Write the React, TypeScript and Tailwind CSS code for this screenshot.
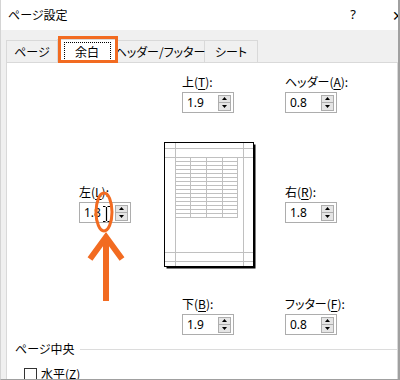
import React from 'react';

const jp = "font-['Meiryo_UI','Noto_Sans_CJK_JP',sans-serif] [font-feature-settings:'palt']";

const Spinner = () => (
  <div className="flex flex-col gap-0 ml-auto mr-[2px]">
    <div className="w-[13px] h-[8px] bg-[#e5e5e5] border border-[#adadad] flex items-center justify-center">
      <svg width="5" height="3" viewBox="0 0 5 3"><path d="M2.5 0 L5 3 L0 3 Z" fill="#000" /></svg>
    </div>
    <div className="w-[13px] h-[8px] bg-[#e5e5e5] border border-[#adadad] border-t-0 flex items-center justify-center">
      <svg width="5" height="3" viewBox="0 0 5 3"><path d="M0 0 L5 0 L2.5 3 Z" fill="#000" /></svg>
    </div>
  </div>
);

const Field = ({ pre, u, value }: { pre: string; u: string; value: string }) => (
  <div className="flex flex-col">
    <div className={`h-[16px] leading-[16px] text-[12px] text-black whitespace-nowrap ${jp}`}>
      {pre}(<span className="underline underline-offset-2">{u}</span>):
    </div>
    <div className="mt-[2px] w-[52px] h-[21px] border border-[#adadad] bg-white flex items-center pl-[4px]">
      <span className="text-[12px] font-['Noto_Sans',sans-serif] text-black">{value}</span>
      <Spinner />
    </div>
  </div>
);

const PagePreview = () => {
  const rows = Array.from({ length: 16 }, (_, i) => 15 + i * 4);
  return (
    <svg width="92" height="127" viewBox="0 0 92 127">
      <rect x="2.5" y="2.5" width="89" height="124" fill="#000" />
      <rect x="0.5" y="0.5" width="89" height="124" fill="#fff" stroke="#000" />
      <g stroke="#c0c0c0" strokeWidth="1">
        <line x1="11.5" y1="1" x2="11.5" y2="124" />
        <line x1="79.5" y1="1" x2="79.5" y2="124" />
        <line x1="1" y1="6.5" x2="89" y2="6.5" />
        <line x1="1" y1="15.5" x2="89" y2="15.5" />
        <line x1="1" y1="110.5" x2="89" y2="110.5" />
        <line x1="1" y1="119.5" x2="89" y2="119.5" />
        {rows.map((y) => (
          <line key={y} x1="11" y1={y + 0.5} x2="73" y2={y + 0.5} />
        ))}
        <line x1="73.5" y1="15" x2="73.5" y2="76" />
        <line x1="26.5" y1="15" x2="26.5" y2="76" />
        <line x1="42.5" y1="15" x2="42.5" y2="76" />
        <line x1="58.5" y1="15" x2="58.5" y2="76" />
      </g>
    </svg>
  );
};

export default function App() {
  return (
    <div className={`relative w-[400px] h-[380px] overflow-hidden bg-white border-l border-l-[#d4d4d4] border-r-2 border-r-[#a0a0a0] border-b border-b-[#a0a0a0] ${jp}`}>
      {/* title bar */}
      <div className="h-[30px] flex items-center pl-[7px] text-[12px] text-black">
        <span>ページ設定</span>
        <span className="ml-auto mr-[36px] text-[13px] font-['Noto_Sans',sans-serif]">?</span>
        <span className="mr-[-6px] text-[14px] font-['Noto_Sans',sans-serif]">✕</span>
      </div>

      <div className="bg-[#f0f0f0] h-[350px] pl-[5px] pt-[8px]">
        {/* tabs */}
        <div className="flex items-end h-[24px] text-[12px] text-black whitespace-nowrap">
          <div className="w-[52px] h-[22px] border border-[#d9d9d9] border-b-0 flex items-center justify-center pt-[1px]">ページ</div>
          <div className="w-[60px] h-[24px] bg-white border border-[#d9d9d9] border-b-0 flex items-center justify-center -mx-[1px] relative z-10 mb-[-1px]">
            <div className="w-[47px] h-[19px] border border-dotted border-black flex items-center justify-center">余白</div>
          </div>
          <div className="w-[89px] h-[22px] border border-[#d9d9d9] border-b-0 border-l-0 flex items-center justify-center pt-[1px]">ヘッダー/フッター</div>
          <div className="w-[53px] h-[22px] border border-[#d9d9d9] border-b-0 border-l-0 flex items-center justify-center pt-[1px]">シート</div>
        </div>

        {/* panel */}
        <div className="bg-white border border-[#d9d9d9] h-[330px] pt-[11px]">
          <div className="flex pl-[175px] gap-[51px]">
            <Field pre="上" u="T" value="1.9" />
            <Field pre="ヘッダー" u="A" value="0.8" />
          </div>

          <div className="flex mt-[29px] h-[127px]">
            <div className="w-[157px] pl-[72px] pt-[42px]">
              <Field pre="左" u="L" value="1.8" />
            </div>
            <PagePreview />
            <div className="pl-[29px] pt-[42px]">
              <Field pre="右" u="R" value="1.8" />
            </div>
          </div>

          <div className="flex pl-[175px] gap-[51px] mt-[27px]">
            <Field pre="下" u="B" value="1.9" />
            <Field pre="フッター" u="F" value="0.8" />
          </div>

          <div className="flex items-center mt-[6px] pl-[8px] h-[16px] text-[12px] text-black">
            <span>ページ中央</span>
            <div className="flex-1 h-px bg-[#dcdcdc] ml-[5px]" />
          </div>
          <div className="flex items-center mt-[8px] pl-[17px] text-[12px] text-black">
            <div className="w-[13px] h-[13px] border border-[#333] bg-white" />
            <span className="ml-[4px]">水平(<span className="underline underline-offset-2">Z</span>)</span>
          </div>
        </div>
      </div>

      {/* annotations */}
      <div className="absolute left-[57px] top-[36px] w-[60px] h-[27px] border-[3px] border-[#f26b21] pointer-events-none z-20" />
      <svg className="absolute left-[85px] top-[188px] z-20" width="40" height="116" viewBox="0 0 40 116">
        {/* I-beam cursor */}
        <g stroke="#000" strokeWidth="1.2" fill="none">
          <line x1="20.5" y1="19" x2="20.5" y2="33" />
          <path d="M17 18.5 H19.5 M21.5 18.5 H24" />
          <path d="M17 33.5 H19.5 M21.5 33.5 H24" />
        </g>
        <ellipse cx="18" cy="24" rx="8" ry="19" fill="none" stroke="#f26b21" strokeWidth="3" />
        <g stroke="#f26b21" strokeWidth="6" fill="none">
          <line x1="20" y1="50" x2="20" y2="113" />
          <path d="M4 71 L20 49 L36 71" strokeLinejoin="miter" />
        </g>
      </svg>
    </div>
  );
}
